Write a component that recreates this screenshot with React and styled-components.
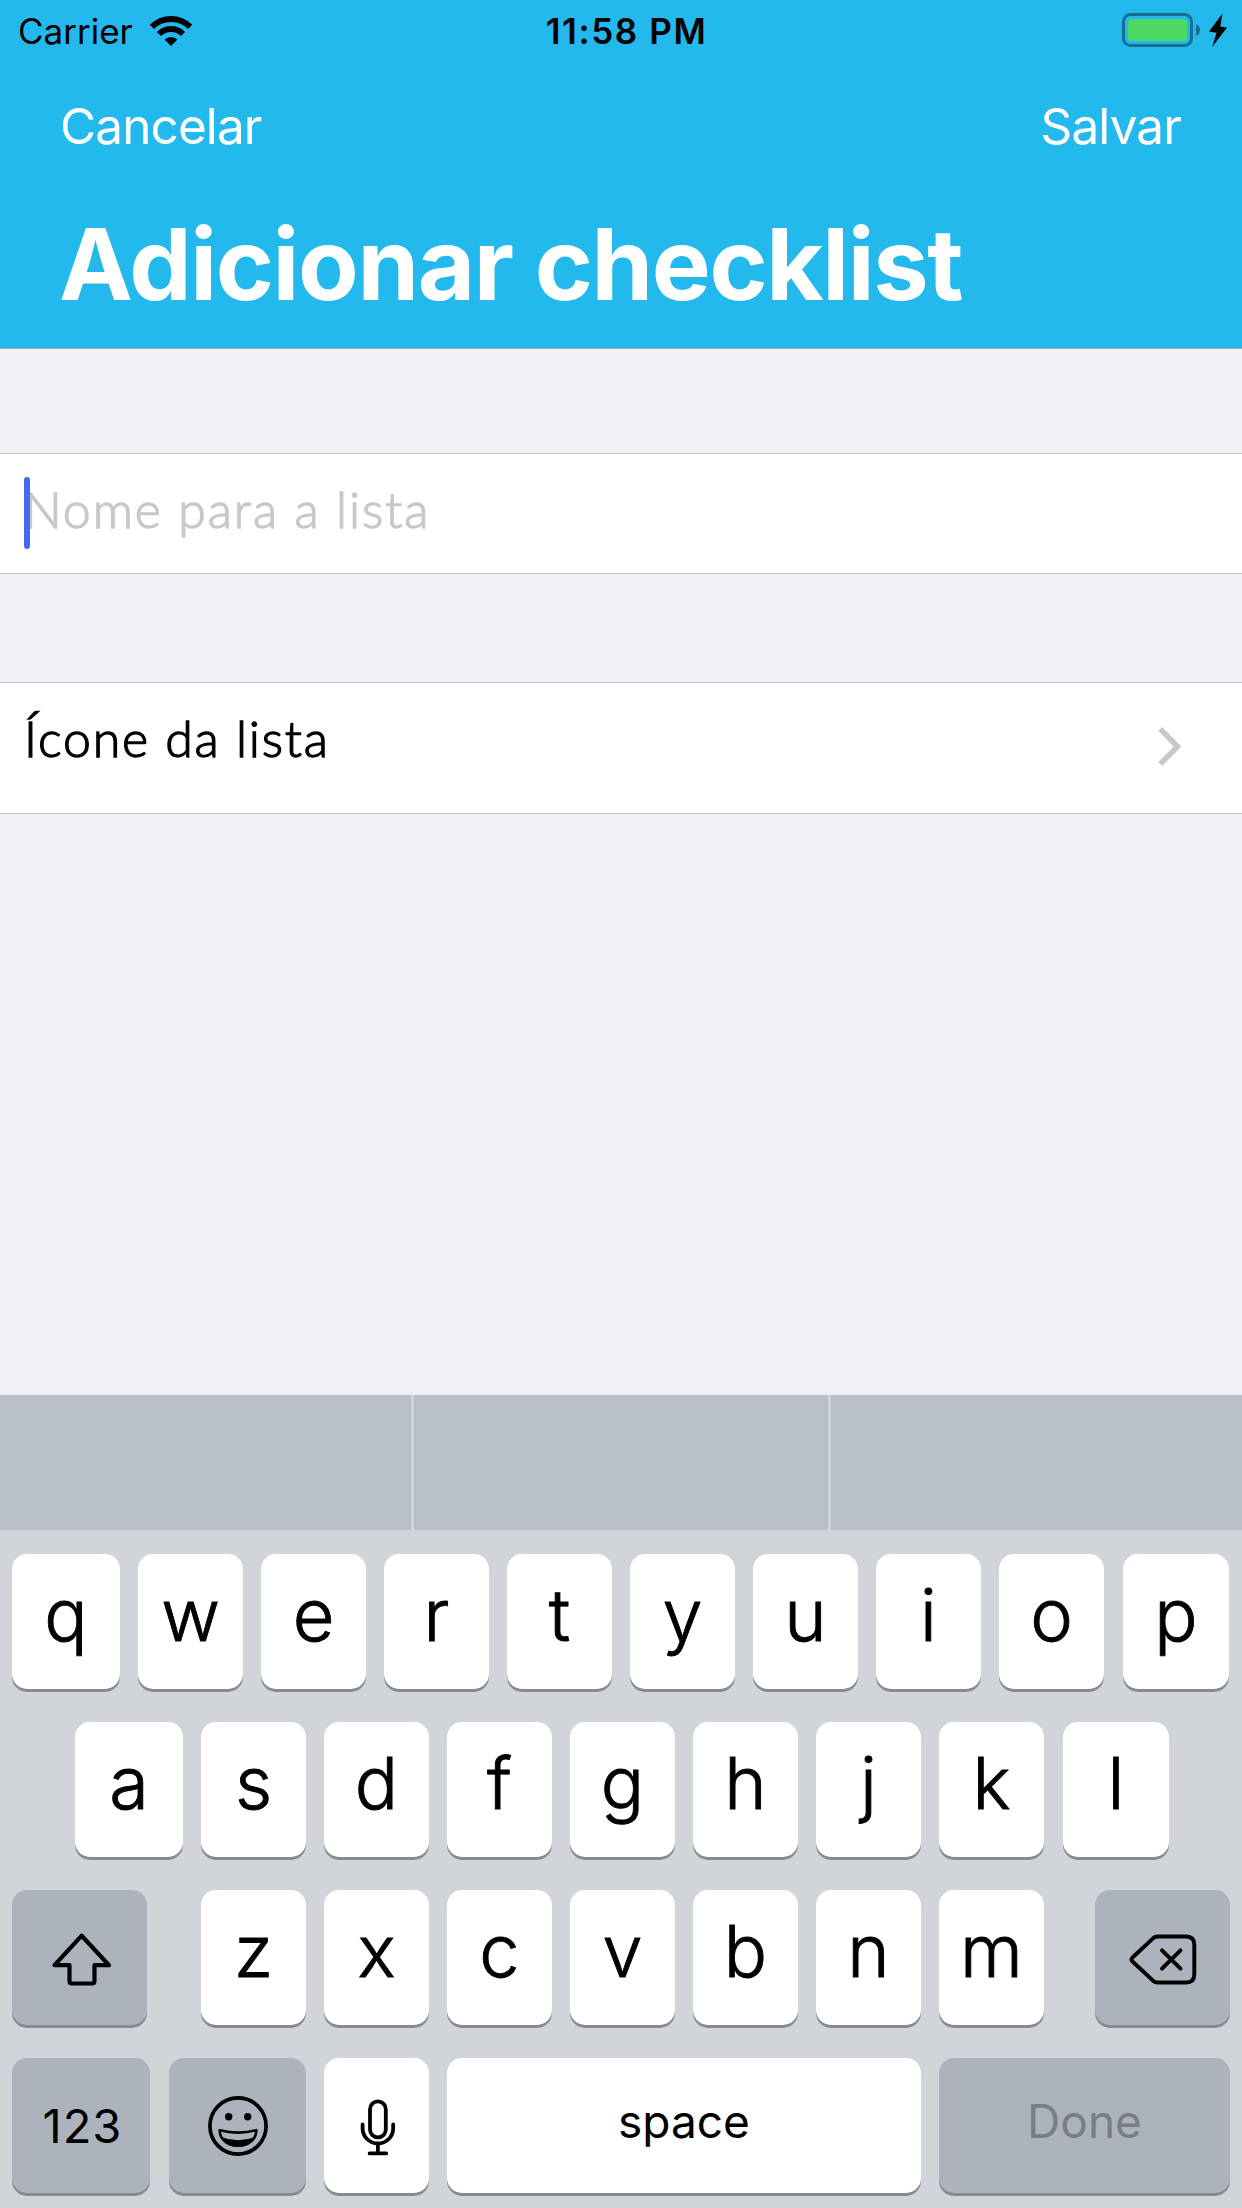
import React from 'react';
import styled, { createGlobalStyle } from 'styled-components';

const GlobalStyle = createGlobalStyle`
  * { box-sizing: border-box; }
  body { margin: 0; background: #efeff4; }
`;

const Screen = styled.div`
  width: 1242px;
  height: 2208px;
  display: flex;
  flex-direction: column;
  overflow: hidden;
  background: #efeff4;
  color: #000;
  font-family: Inter, 'Liberation Sans', sans-serif;
  svg { display: block; flex: none; }
`;

const Header = styled.header`
  height: 349px;
  background: #24b9ed;
  border-bottom: 1px solid #a2abb4;
`;

const StatusBar = styled.div`
  height: 60px;
  display: grid;
  grid-template-columns: 1fr auto 1fr;
  align-items: center;
  padding: 0 15px 0 18px;
  font-size: 35px;
  line-height: 60px;
`;

const Carrier = styled.div`
  display: flex;
  align-items: center;
  gap: 16px;
  padding-top: 1px;
`;

const Clock = styled.div`
  padding: 1px 0 0 8px;
  font-weight: 560;
  letter-spacing: 1.6px;
`;

const Power = styled.div`
  display: flex;
  justify-content: flex-end;
  padding-bottom: 1px;
`;

const NavBar = styled.nav`
  height: 132px;
  display: flex;
  justify-content: space-between;
  padding: 0 61px 0 60px;
  line-height: 132px;
`;

const NavAction = styled.span`
  font-size: 49.5px;
  letter-spacing: -0.9px;
  color: #fff;
`;

const Title = styled.h1`
  margin: 0;
  padding-left: 59px;
  font-size: 99px;
  font-weight: 700;
  line-height: 144px;
  letter-spacing: -1.38px;
  white-space: nowrap;
  color: #fff;
`;

const Form = styled.main`
  flex: 1;
  display: flex;
  flex-direction: column;
  gap: 108px;
  padding-top: 104px;
`;

const Cell = styled.div`
  height: ${(p) => p.$height}px;
  display: flex;
  align-items: center;
  padding: 0 59px 0 24px;
  border: solid #c8c7cc;
  border-width: 1px 0;
  background: #fff;
`;

const Caret = styled.span`
  width: 6px;
  height: 72px;
  margin: 0 -6px 2px 0;
  border-radius: 3px;
  background: #426bf2;
  z-index: 1;
`;

const CellText = styled.span`
  flex: 1;
  padding-bottom: ${(p) => p.$lift}px;
  font-family: Lato, 'Open Sans', sans-serif;
  font-size: 50px;
  font-weight: 300;
  letter-spacing: ${(p) => p.$spacing}px;
  line-height: 60px;
  color: ${(p) => p.$color};
  -webkit-text-stroke: 1.3px ${(p) => p.$color};
`;

const Keyboard = styled.section`
  height: 813px;
  background: #d1d4d9;
`;

const Suggestions = styled.div`
  height: 135px;
  display: grid;
  grid-template-columns: 411px 414px 1fr;
  column-gap: 3px;
`;

const Suggestion = styled.div`
  background: #b8bfc7;
`;

const Rows = styled.div`
  display: flex;
  flex-direction: column;
  gap: 33px;
  padding-top: 24px;
`;

const Row = styled.div`
  display: flex;
  gap: 18px;
  padding-left: ${(p) => p.$inset || 12}px;
`;

const Key = styled.div`
  flex: none;
  width: ${(p) => p.$width || 105}px;
  height: 135px;
  margin-left: ${(p) => p.$before || 0}px;
  padding-bottom: ${(p) => p.$lift || 0}px;
  display: flex;
  align-items: center;
  justify-content: center;
  border-radius: 15px;
  background: ${(p) => (p.$dark ? '#acb3bd' : '#fff')};
  box-shadow: 0 3px 0 #878b8f;
`;

const Letter = styled.span`
  font-size: 72px;
  font-weight: 300;
  line-height: 90px;
  -webkit-text-stroke: 0.9px #000;
`;

const KeyLabel = styled.span`
  padding-left: ${(p) => p.$nudge || 0}px;
  font-size: ${(p) => p.$size || 46}px;
  line-height: 60px;
  letter-spacing: ${(p) => p.$spacing || 0}px;
  color: ${(p) => (p.$muted ? '#787e86' : '#000')};
`;

const WifiIcon = () => (
  <svg width="44" height="32" viewBox="0 0 44 32">
    <g fill="none" stroke="#000" strokeWidth="6">
      <path d="M2.9 11.9A27 27 0 0 1 41.1 11.9" />
      <path d="M10 19A17 17 0 0 1 34 19" />
    </g>
    <path d="M22 31L15.6 24.6A9.2 9.2 0 0 1 28.4 24.6Z" />
  </svg>
);

const BatteryIcon = () => (
  <svg width="105" height="36" viewBox="0 0 105 36">
    <rect x="1.5" y="2.5" width="68" height="31" rx="7" fill="none" stroke="#176f8f" strokeWidth="3" />
    <rect x="6" y="7" width="59" height="22" rx="3.5" fill="#4cd964" />
    <path d="M74 12Q78 14 78 18T74 24Z" fill="#176f8f" />
    <path d="M100.5 1.5L87 19.5L94.5 20.8L90.2 35L105 15.5L98.2 14.5Z" />
  </svg>
);

const ChevronIcon = () => (
  <svg width="26" height="42" viewBox="0 0 26 42">
    <path d="M3.2 2L20.5 19.5L3.2 37" fill="none" stroke="#c7c7cc" strokeWidth="5.6" />
  </svg>
);

const ShiftIcon = () => (
  <svg width="70" height="60" viewBox="0 0 70 60">
    <path
      d="M36.7 7.7L64 37.2H49.5V53Q49.5 55.5 47 55.5H27Q24.5 55.5 24.5 53V37.2H9.5Z"
      fill="none"
      stroke="#000"
      strokeWidth="4.2"
      strokeLinejoin="round"
    />
  </svg>
);

const DeleteIcon = () => (
  <svg width="72" height="56" viewBox="0 0 72 56">
    <g fill="none" stroke="#000" strokeWidth="3.9" strokeLinecap="round" strokeLinejoin="round">
      <path d="M31 6.5H59Q67.3 6.5 67.3 14.8V44.2Q67.3 52.5 59 52.5H31Q27.5 52.5 25.5 50.2L5.5 31.5Q3.6 29.5 5.5 27.5L25.5 8.8Q27.5 6.5 31 6.5Z" />
      <path d="M35 20.3L53.5 38.7M53.5 20.3L35 38.7" />
    </g>
  </svg>
);

const EmojiIcon = () => (
  <svg width="62" height="62" viewBox="0 0 62 62">
    <circle cx="31" cy="31" r="28.1" fill="none" stroke="#000" strokeWidth="3.7" />
    <circle cx="21.7" cy="21.7" r="3.7" />
    <circle cx="40.7" cy="21.7" r="3.7" />
    <path
      d="M12.7 35.2Q31 40 49.3 35.2C49.5 44.5 41 50.8 31 50.8S12.5 44.5 12.7 35.2Z"
      fill="none"
      stroke="#000"
      strokeWidth="2.6"
      strokeLinejoin="round"
    />
    <path d="M14.3 42.3Q31 48 47.7 42.3C44.5 49 38 51.8 31 51.8S17.5 49 14.3 42.3Z" />
  </svg>
);

const MicIcon = () => (
  <svg width="50" height="62" viewBox="0 0 50 62">
    <g fill="none" stroke="#000" strokeWidth="3.8" strokeLinecap="round">
      <rect x="18" y="6.4" width="15.8" height="36" rx="7.9" />
      <path d="M10.6 29.5V33.2A15.3 15.3 0 0 0 41.2 33.2V29.5M25.9 49V58.4M17.6 58.4H34.2" />
    </g>
  </svg>
);

const LetterRow = ({ letters, inset }) => (
  <Row $inset={inset}>
    {letters.split('').map((letter, i) => {
      const last = i === letters.length - 1;
      return (
        <Key key={letter} $lift={13} $width={i === 0 ? 108 : last ? 106 : 105} $before={last ? 1 : 0}>
          <Letter>{letter}</Letter>
        </Key>
      );
    })}
  </Row>
);

export default function App() {
  return (
    <Screen>
      <GlobalStyle />
      <Header>
        <StatusBar>
          <Carrier>
            Carrier
            <WifiIcon />
          </Carrier>
          <Clock>11:58 PM</Clock>
          <Power>
            <BatteryIcon />
          </Power>
        </StatusBar>
        <NavBar>
          <NavAction>Cancelar</NavAction>
          <NavAction>Salvar</NavAction>
        </NavBar>
        <Title>Adicionar checklist</Title>
      </Header>
      <Form>
        <Cell $height={121}>
          <Caret />
          <CellText $spacing={1.9} $lift={9} $color="#c7c7cd">Nome para a lista</CellText>
        </Cell>
        <Cell $height={132}>
          <CellText $spacing={1.8} $lift={20} $color="#000">Ícone da lista</CellText>
          <ChevronIcon />
        </Cell>
      </Form>
      <Keyboard>
        <Suggestions>
          <Suggestion />
          <Suggestion />
          <Suggestion />
        </Suggestions>
        <Rows>
          <LetterRow letters="qwertyuiop" />
          <LetterRow letters="asdfghjkl" inset={75} />
          <Row>
            <Key $dark $width={135}>
              <ShiftIcon />
            </Key>
            {'zxcvbnm'.split('').map((letter, i) => (
              <Key key={letter} $lift={13} $before={i === 0 ? 36 : 0}>
                <Letter>{letter}</Letter>
              </Key>
            ))}
            <Key $dark $width={135} $before={33}>
              <DeleteIcon />
            </Key>
          </Row>
          <Row>
            <Key $dark $width={138}>
              <KeyLabel $size={47} $spacing={1} $nudge={3}>123</KeyLabel>
            </Key>
            <Key $dark $width={137} $before={1}>
              <EmojiIcon />
            </Key>
            <Key>
              <MicIcon />
            </Key>
            <Key $width={474} $lift={10}>
              <KeyLabel>space</KeyLabel>
            </Key>
            <Key $dark $width={291} $lift={10}>
              <KeyLabel $muted>Done</KeyLabel>
            </Key>
          </Row>
        </Rows>
      </Keyboard>
    </Screen>
  );
}
